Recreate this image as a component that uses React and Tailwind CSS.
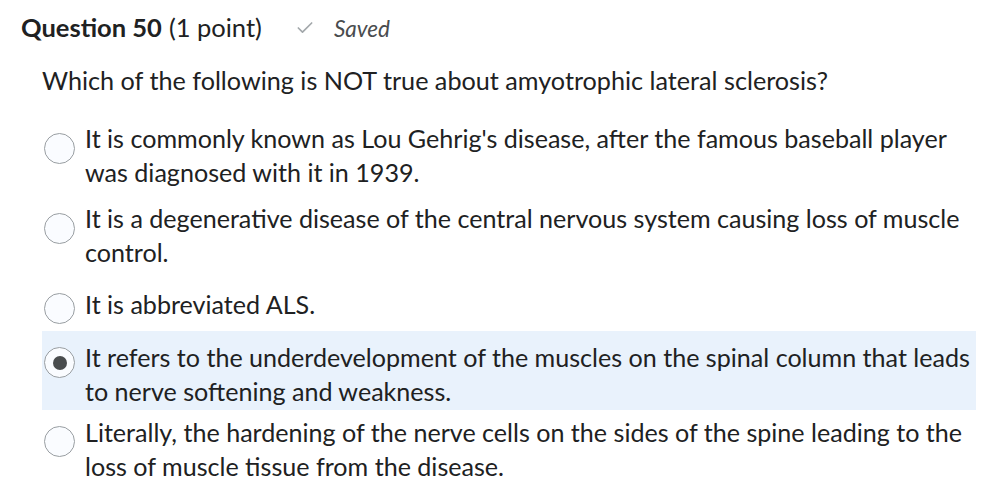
import { Check } from 'lucide-react'

const options = [
  {
    lines: ["It is commonly known as Lou Gehrig's disease, after the famous baseball player", 'was diagnosed with it in 1939.'],
    row: 'pt-[4px] pb-[6px]',
    radio: 'mt-[12px]',
  },
  {
    lines: ['It is a degenerative disease of the central nervous system causing loss of muscle', 'control.'],
    row: 'pt-[6px] pb-[6px]',
    radio: 'mt-[12px]',
  },
  {
    lines: ['It is abbreviated ALS.'],
    row: 'pt-[12px] pb-[7px]',
    radio: 'mt-[6px]',
  },
  {
    lines: ['It refers to the underdevelopment of the muscles on the spinal column that leads', 'to nerve softening and weakness.'],
    row: 'pt-[9px] pb-[2px] bg-[#e9f2fc]',
    radio: 'mt-[7px]',
    selected: true,
  },
  {
    lines: ['Literally, the hardening of the nerve cells on the sides of the spine leading to the', 'loss of muscle tissue from the disease.'],
    row: 'pt-[5px] pb-[6px]',
    radio: 'mt-[11px]',
  },
]

const Radio = ({ selected, className }) => (
  <div className={`shrink-0 w-[31px] h-[31px] rounded-full border-[1.5px] border-[#999ea2] bg-[#fafcff] flex items-center justify-center ${className}`}>
    {selected && <div className="w-[14px] h-[14px] rounded-full bg-[#494c4e]" />}
  </div>
)

export default function App() {
  return (
    <div className="w-[1000px] h-[502px] bg-white text-[#202122] font-['Lato',sans-serif] overflow-hidden">
      {/* Header */}
      <div className="pt-[11px] pl-[21px] flex items-baseline text-[25.5px] leading-[32px]">
        <span className="font-bold">Question 50</span>
        <span className="ml-[7px]">(1 point)</span>
        <span className="ml-[33px] self-center text-[#a3a8ab]">
          <Check size={20} strokeWidth={2} />
        </span>
        <span className="ml-[19px] italic text-[22.5px] text-[#494c4e]">Saved</span>
      </div>

      {/* Question */}
      <p className="mt-[18px] pl-[42px] text-[25.2px] leading-[34px]">
        Which of the following is NOT true about amyotrophic lateral sclerosis?
      </p>

      {/* Options */}
      <div className="mt-[20px] ml-[42px] w-[934px]">
        {options.map((opt, i) => (
          <div key={i} className={`flex items-start pl-[2px] ${opt.row}`}>
            <Radio selected={opt.selected} className={opt.radio} />
            <div className="ml-[10px] text-[25.1px] leading-[34px] whitespace-nowrap">
              {opt.lines.map((l, j) => (
                <div key={j}>{l}</div>
              ))}
            </div>
          </div>
        ))}
      </div>
    </div>
  )
}
